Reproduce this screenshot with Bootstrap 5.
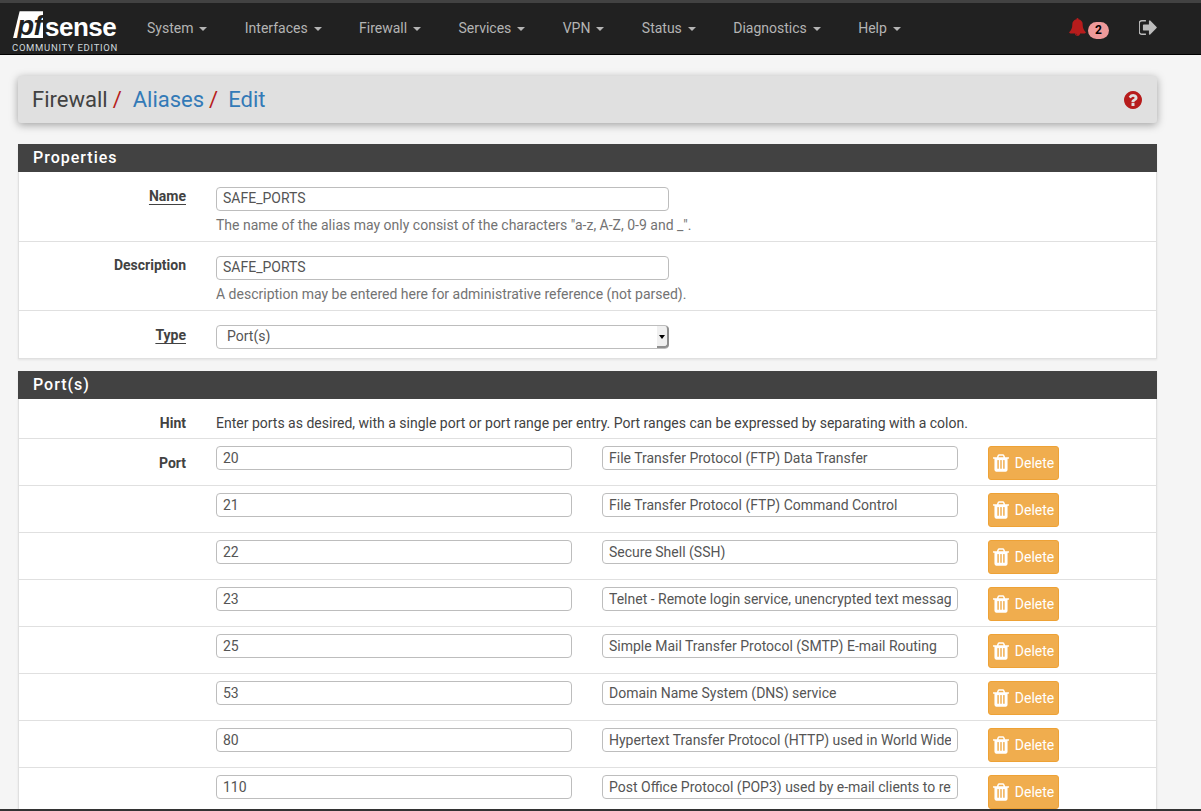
<!DOCTYPE html>
<html lang="en">
<head>
    <meta charset="UTF-8">
    <title>Firewall / Aliases / Edit</title>
    <link href="https://cdn.jsdelivr.net/npm/bootstrap@5.3.0/dist/css/bootstrap.min.css" rel="stylesheet">
    <style>
        html, body { height: 811px; overflow: hidden; }
        body {
            font-family: Roboto, sans-serif;
            font-size: 14px;
            line-height: 20px;
            color: #424242;
            background: #f5f5f5;
            border-top: 3px solid #424242;
            border-bottom: 2px solid #333;
            position: relative;
        }
        .top-nav {
            background: #212121;
            height: 52px;
            border-bottom: 1px solid #000;
            padding: 0;
            flex-wrap: nowrap;
        }
        .brand-box { width: 128.3px; padding: 7px 0 0 12px; flex: none; }
        .brand-main { display: flex; align-items: flex-end; height: 27px; }
        .brand-pf {
            background: #fff;
            color: #212121;
            font: italic 700 28px/29px "Liberation Sans", sans-serif;
            width: 30px;
            height: 27px;
            margin-left: 1px;
            padding-left: 4px;
            letter-spacing: -.5px;
            clip-path: polygon(22% 0, 100% 0, 100% 100%, 0 100%);
        }
        .brand-sense {
            color: #fff;
            font: 700 26px/20px "Liberation Sans", sans-serif;
            letter-spacing: -.5px;
            margin: 0 0 1px 2px;
        }
        .brand-sub {
            color: #cfd8dc;
            font-size: 9.5px;
            line-height: 11px;
            letter-spacing: .7px;
            white-space: nowrap;
            margin-top: 3.5px;
        }
        .top-nav .nav-link {
            color: #b4b4b4;
            padding: 15px 18.7px 16px;
            line-height: 20px;
            white-space: nowrap;
        }
        .top-nav .dropdown-toggle::after { margin-left: 6px; vertical-align: 2px; border-top-width: 4px; border-left-width: 4px; border-right-width: 4px; }
        .nav-end { margin-left: auto; display: flex; align-items: center; height: 51px; padding-right: 44px; }
        .bell-ico { width: 17px; height: 18px; fill: #b71c1c; margin-bottom: 3px; }
        .bell-count {
            background: #ef9a9a;
            color: #000;
            font-size: 12px;
            font-weight: 700;
            line-height: 17px;
            width: 21px;
            height: 17px;
            margin: 4px 0 0 2px;
            border-radius: 9px;
            text-align: center;
        }
        .exit-ico { width: 18px; height: 15px; fill: #bdbdbd; margin: 0 0 3px 30px; }
        .page-wrap { padding: 21px 44px 0 18px; }
        .crumb-bar {
            background: #e0e0e0;
            height: 47px;
            border-radius: 3px;
            box-shadow: 0 2px 8px rgba(0,0,0,.35);
            padding: 0 15px 0 14px;
            font-size: 22px;
            margin-bottom: 21px;
        }
        .crumb-bar a { color: #337ab7; text-decoration: none; margin-left: 11px; }
        .crumb-sep { color: #b71c1c; margin-left: 5px; }
        .crumb-sep + a + .crumb-sep + a { margin-left: 10px; }
        .help-ico { width: 18px; height: 18px; fill: #b71c1c; margin-left: auto; }
        .sect {
            background: #fff;
            border: 1px solid #e0e0e0;
            border-top: 0;
            box-shadow: 0 1px 2px rgba(0,0,0,.08);
            margin-bottom: 12px;
        }
        .sect-head {
            background: #424242;
            color: #fff;
            font-size: 16px;
            font-weight: 500;
            letter-spacing: 1px;
            line-height: 28px;
            height: 28px;
            margin: 0 -1px;
            padding-left: 15px;
        }
        .fld-row { display: flex; border-bottom: 1px solid #e0e0e0; padding-top: 14px; }
        .fld-row:last-child { border-bottom: 0; }
        .fld-label {
            width: 167px;
            flex: none;
            text-align: right;
            font-weight: 700;
            line-height: 20px;
            margin-right: 30px;
        }
        .fld-label u { text-underline-offset: 3px; }
        .fld-body { min-width: 0; margin-top: 0; }
        .fld-input {
            display: block;
            height: 24px;
            border: 1px solid #bdbdbd;
            border-radius: 4px;
            padding: 0 6px;
            font: 14px/22px Roboto, sans-serif;
            color: #555;
            background: #fff;
            outline: 0;
        }
        .inp-wide { width: 453px; padding-bottom: 2px; }
        .inp-half { width: 356px; }
        .fld-help { color: #737373; margin: 4px 0 0; line-height: 20px; }
        .row-name { height: 70px; padding-top: 15px; }
        .row-name .fld-label, .row-desc .fld-label { margin-top: -1px; }
        .row-desc { height: 69px; }
        .row-type { height: 47px; }
        .row-hint { height: 40px; padding-top: 14px; }
        .row-port { height: 47px; padding-top: 7px; }
        .row-port .fld-label { padding-top: 7px; line-height: 20px; }
        .row-port .fld-input { margin-right: 30px; flex: none; }
        .sel-wrap { position: relative; width: 453px; }
        .sel-type { width: 453px; padding: 0 6px 3px 10px; line-height: 18px; appearance: none; -webkit-appearance: none; }
        .sel-wrap::before {
            content: "";
            position: absolute;
            top: 1px;
            right: 0;
            width: 12px;
            height: 22px;
            background: #f0f0f0;
            border-right: 2px solid #8f8f8f;
            border-bottom: 2px solid #8f8f8f;
            border-radius: 0 4px 4px 0;
        }
        .sel-wrap::after {
            content: "";
            position: absolute;
            top: 10px;
            right: 4px;
            border-top: 4px solid #000;
            border-left: 3px solid transparent;
            border-right: 3px solid transparent;
        }
        .del-btn {
            background: #f0ad4e;
            border: 1px solid #eea236;
            color: #fff;
            width: 71px;
            height: 34px;
            padding: 0;
            font-size: 14px;
            border-radius: 3px;
            white-space: nowrap;
            margin-top: 0;
        }
        .del-btn svg { width: 16px; height: 18px; fill: #fff; margin-right: 6px; vertical-align: -4px; }
    </style>
</head>
<body>
    <svg width="0" height="0" class="position-absolute">
        <symbol id="i-bell" viewBox="64 0 1664 1792"><path d="M912 1696q0-16-16-16-59 0-101.5-42.5t-42.5-101.5q0-16-16-16t-16 16q0 73 51.5 124.5t124.5 51.5q16 0 16-16zm816-288q0 52-38 90t-90 38h-448q0 106-75 181t-181 75-181-75-75-181h-448q-52 0-90-38t-38-90q50-42 91-88t85-119.5 74.5-158.5 50-206 19.5-260q0-152 117-282.5t307-158.5q-8-19-8-39 0-40 28-68t68-28 68 28 28 68q0 20-8 39 190 28 307 158.5t117 282.5q0 139 19.5 260t50 206 74.5 158.5 85 119.5 91 88z"/></symbol>
        <symbol id="i-exit" viewBox="128 256 1504 1280"><path d="M704 1440q0 4 1 20t.5 26.5-3 23.5-10 19.5-20.5 6.5h-320q-119 0-203.5-84.5t-84.5-203.5v-704q0-119 84.5-203.5t203.5-84.5h320q13 0 22.5 9.5t9.5 22.5q0 4 1 20t.5 26.5-3 23.5-10 19.5-20.5 6.5h-320q-66 0-113 47t-47 113v704q0 66 47 113t113 47h312l11.5 1 11.5 3 8 5.5 7 9 2 13.5zm928-544q0 26-19 45l-544 544q-19 19-45 19t-45-19-19-45v-288h-448q-26 0-45-19t-19-45v-384q0-26 19-45t45-19h448v-288q0-26 19-45t45-19 45 19l544 544q19 19 19 45z"/></symbol>
        <symbol id="i-help" viewBox="128 128 1536 1536"><path d="M1024 1376v-192q0-14-9-23t-23-9h-192q-14 0-23 9t-9 23v192q0 14 9 23t23 9h192q14 0 23-9t9-23zm256-672q0-88-55.5-163t-138.5-116-170-41q-243 0-371 213-15 24 8 42l132 100q7 6 19 6 16 0 25-12 53-68 86-92 34-24 86-24 48 0 85.5 26t37.5 59q0 38-20 61t-68 45q-63 28-115.5 86.5t-52.5 125.5v36q0 14 9 23t23 9h192q14 0 23-9t9-23q0-19 21.5-49.5t54.5-49.5q32-18 49-28.5t46-35 44.5-48 28-60.5 12.5-81zm384 192q0 209-103 385.5t-279.5 279.5-385.5 103-385.5-103-279.5-279.5-103-385.5 103-385.5 279.5-279.5 385.5-103 385.5 103 279.5 279.5 103 385.5z"/></symbol>
        <symbol id="i-trash" viewBox="192 128 1408 1536"><path d="M704 1376v-704q0-14-9-23t-23-9h-64q-14 0-23 9t-9 23v704q0 14 9 23t23 9h64q14 0 23-9t9-23zm256 0v-704q0-14-9-23t-23-9h-64q-14 0-23 9t-9 23v704q0 14 9 23t23 9h64q14 0 23-9t9-23zm256 0v-704q0-14-9-23t-23-9h-64q-14 0-23 9t-9 23v704q0 14 9 23t23 9h64q14 0 23-9t9-23zm-544-992h448l-48-117q-7-9-17-11h-317q-10 2-17 11zm928 32v64q0 14-9 23t-23 9h-96v948q0 83-47 143.5t-113 60.5h-832q-66 0-113-58.5t-47-141.5v-952h-96q-14 0-23-9t-9-23v-64q0-14 9-23t23-9h309l70-167q15-37 54-63t79-26h320q40 0 79 26t54 63l70 167h309q14 0 23 9t9 23z"/></symbol>
    </svg>

    <nav class="navbar top-nav">
        <div class="brand-box">
            <div class="brand-main"><span class="brand-pf">pf</span><span class="brand-sense">sense</span></div>
            <div class="brand-sub">COMMUNITY EDITION</div>
        </div>
        <ul class="nav flex-nowrap">
            <li class="nav-item"><a class="nav-link dropdown-toggle" href="#">System</a></li>
            <li class="nav-item"><a class="nav-link dropdown-toggle" href="#">Interfaces</a></li>
            <li class="nav-item"><a class="nav-link dropdown-toggle" href="#">Firewall</a></li>
            <li class="nav-item"><a class="nav-link dropdown-toggle" href="#">Services</a></li>
            <li class="nav-item"><a class="nav-link dropdown-toggle" href="#">VPN</a></li>
            <li class="nav-item"><a class="nav-link dropdown-toggle" href="#">Status</a></li>
            <li class="nav-item"><a class="nav-link dropdown-toggle" href="#">Diagnostics</a></li>
            <li class="nav-item"><a class="nav-link dropdown-toggle" href="#">Help</a></li>
        </ul>
        <div class="nav-end">
            <svg class="bell-ico"><use href="#i-bell"/></svg>
            <span class="bell-count">2</span>
            <svg class="exit-ico"><use href="#i-exit"/></svg>
        </div>
    </nav>

    <div class="page-wrap">
        <div class="crumb-bar d-flex align-items-center">
            <span>Firewall</span><span class="crumb-sep">/</span>
            <a href="#">Aliases</a><span class="crumb-sep">/</span>
            <a href="#">Edit</a>
            <svg class="help-ico"><use href="#i-help"/></svg>
        </div>

        <div class="sect">
            <div class="sect-head">Properties</div>
            <div class="fld-row row-name">
                <div class="fld-label"><u>Name</u></div>
                <div class="fld-body">
                    <input class="fld-input inp-wide" value="SAFE_PORTS">
                    <p class="fld-help">The name of the alias may only consist of the characters "a-z, A-Z, 0-9 and _".</p>
                </div>
            </div>
            <div class="fld-row row-desc">
                <div class="fld-label">Description</div>
                <div class="fld-body">
                    <input class="fld-input inp-wide" value="SAFE_PORTS">
                    <p class="fld-help">A description may be entered here for administrative reference (not parsed).</p>
                </div>
            </div>
            <div class="fld-row row-type">
                <div class="fld-label"><u>Type</u></div>
                <div class="fld-body">
                    <div class="sel-wrap"><select class="fld-input sel-type"><option>Port(s)</option></select></div>
                </div>
            </div>
        </div>

        <div class="sect">
            <div class="sect-head">Port(s)</div>
            <div class="fld-row row-hint">
                <div class="fld-label">Hint</div>
                <div class="fld-body">Enter ports as desired, with a single port or port range per entry. Port ranges can be expressed by separating with a colon.</div>
            </div>
            <div class="fld-row row-port">
                <div class="fld-label">Port</div>
                <input class="fld-input inp-half" value="20">
                <input class="fld-input inp-half" value="File Transfer Protocol (FTP) Data Transfer">
                <button class="btn del-btn"><svg><use href="#i-trash"/></svg>Delete</button>
            </div>
            <div class="fld-row row-port">
                <div class="fld-label"></div>
                <input class="fld-input inp-half" value="21">
                <input class="fld-input inp-half" value="File Transfer Protocol (FTP) Command Control">
                <button class="btn del-btn"><svg><use href="#i-trash"/></svg>Delete</button>
            </div>
            <div class="fld-row row-port">
                <div class="fld-label"></div>
                <input class="fld-input inp-half" value="22">
                <input class="fld-input inp-half" value="Secure Shell (SSH)">
                <button class="btn del-btn"><svg><use href="#i-trash"/></svg>Delete</button>
            </div>
            <div class="fld-row row-port">
                <div class="fld-label"></div>
                <input class="fld-input inp-half" value="23">
                <input class="fld-input inp-half" value="Telnet - Remote login service, unencrypted text messages">
                <button class="btn del-btn"><svg><use href="#i-trash"/></svg>Delete</button>
            </div>
            <div class="fld-row row-port">
                <div class="fld-label"></div>
                <input class="fld-input inp-half" value="25">
                <input class="fld-input inp-half" value="Simple Mail Transfer Protocol (SMTP) E-mail Routing">
                <button class="btn del-btn"><svg><use href="#i-trash"/></svg>Delete</button>
            </div>
            <div class="fld-row row-port">
                <div class="fld-label"></div>
                <input class="fld-input inp-half" value="53">
                <input class="fld-input inp-half" value="Domain Name System (DNS) service">
                <button class="btn del-btn"><svg><use href="#i-trash"/></svg>Delete</button>
            </div>
            <div class="fld-row row-port">
                <div class="fld-label"></div>
                <input class="fld-input inp-half" value="80">
                <input class="fld-input inp-half" value="Hypertext Transfer Protocol (HTTP) used in World Wide Web">
                <button class="btn del-btn"><svg><use href="#i-trash"/></svg>Delete</button>
            </div>
            <div class="fld-row row-port">
                <div class="fld-label"></div>
                <input class="fld-input inp-half" value="110">
                <input class="fld-input inp-half" value="Post Office Protocol (POP3) used by e-mail clients to retrieve">
                <button class="btn del-btn"><svg><use href="#i-trash"/></svg>Delete</button>
            </div>
        </div>
    </div>

    <script src="https://cdn.jsdelivr.net/npm/bootstrap@5.3.0/dist/js/bootstrap.bundle.min.js"></script>
</body>
</html>
